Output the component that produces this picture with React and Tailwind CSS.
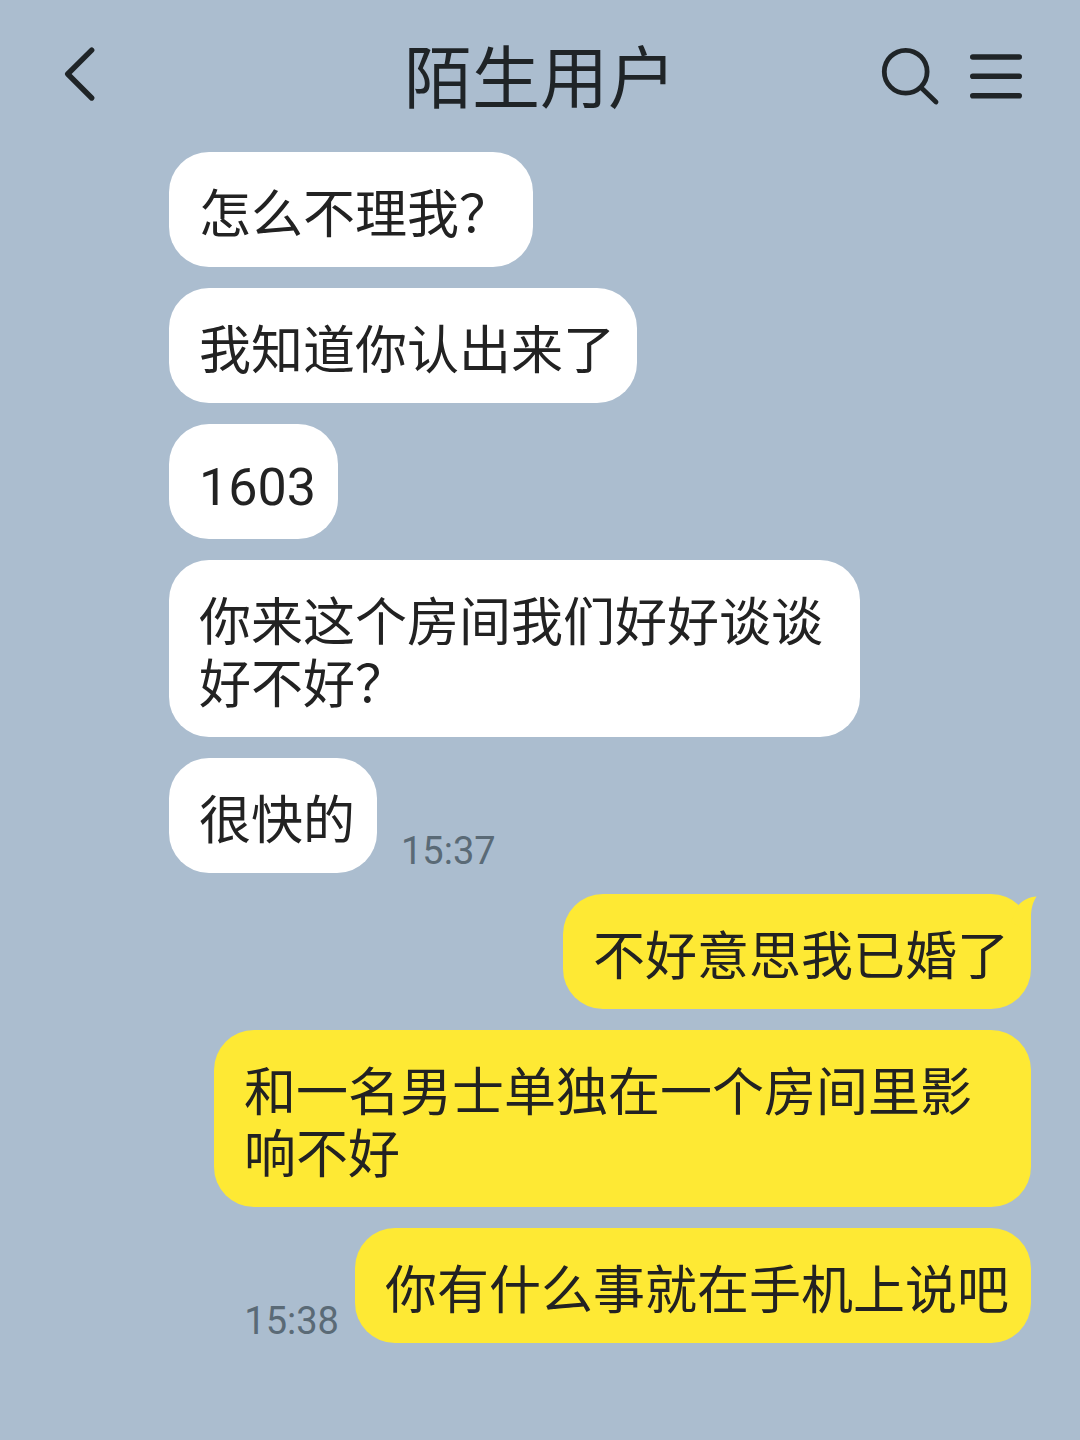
import React from 'react';
import clsx from 'clsx';

const title = '陌生用户';

const messages = [
  { id: 1, from: 'them', text: '怎么不理我？' },
  { id: 2, from: 'them', text: '我知道你认出来了' },
  { id: 3, from: 'them', text: '1603' },
  { id: 4, from: 'them', text: '你来这个房间我们好好谈谈好不好？' },
  { id: 5, from: 'them', text: '很快的', time: '15:37' },
  { id: 6, from: 'me', text: '不好意思我已婚了', tail: true },
  { id: 7, from: 'me', text: '和一名男士单独在一个房间里影响不好' },
  { id: 8, from: 'me', text: '你有什么事就在手机上说吧', time: '15:38' },
];

function BackIcon() {
  return (
    <svg className="size-15" viewBox="0 0 60 60" fill="none" stroke="currentColor" strokeWidth="5.4" strokeLinecap="round" strokeLinejoin="round" aria-hidden="true">
      <path d="M43.7 4.2 19.7 28 43.7 52" />
    </svg>
  );
}

function SearchIcon() {
  return (
    <svg className="size-15 overflow-visible" viewBox="0 0 60 60" fill="none" stroke="currentColor" strokeWidth="4.8" strokeLinecap="round" aria-hidden="true">
      <circle cx="27.7" cy="25.7" r="21.4" />
      <path d="M43.5 42 58 56" />
    </svg>
  );
}

function MenuIcon() {
  return (
    <svg className="size-15" viewBox="0 0 60 60" fill="none" stroke="currentColor" strokeWidth="5.6" strokeLinecap="round" aria-hidden="true">
      <path d="M6.8 11H53.2M6.8 30.3H53.2M6.8 49.8H53.2" />
    </svg>
  );
}

function Tail() {
  return (
    <svg className="absolute top-0 -right-2 size-10" viewBox="0 0 40 40" fill="#fee934" aria-hidden="true">
      <path d="M20 10.5C25 6 30 3 37.6 2.6C34 8 32 14 32 24V40L12 28Z" />
    </svg>
  );
}

function Message({ from, text, time, tail }) {
  const mine = from === 'me';
  return (
    <li className={clsx('flex items-end', mine ? 'flex-row-reverse gap-4' : 'gap-6')}>
      <p
        className={clsx(
          'relative rounded-[40px] pt-[33px] pr-[22px] pb-5 pl-[30px] text-[52px] leading-[62px] break-words',
          mine ? 'max-w-[817px] bg-[#fee934]' : 'max-w-[691px] bg-white'
        )}
      >
        {text}
        {tail && <Tail />}
      </p>
      {time && <time className="text-[38px] leading-[44px] text-[#5a6a76]">{time}</time>}
    </li>
  );
}

export default function App() {
  return (
    <div className="min-h-screen bg-[#abbdcf] font-[Roboto,'Noto_Sans_CJK_SC',sans-serif] text-[#222222]">
      <header className="grid grid-cols-[1fr_auto_1fr] items-center px-12 text-[#1f2427]">
        <button type="button" aria-label="返回" className="justify-self-start">
          <BackIcon />
        </button>
        <h1 className="pt-10 pb-8 text-[68px] leading-[80px]">{title}</h1>
        <div className="mr-1.5 flex gap-7 justify-self-end">
          <button type="button" aria-label="搜索">
            <SearchIcon />
          </button>
          <button type="button" aria-label="菜单">
            <MenuIcon />
          </button>
        </div>
      </header>

      <main className="pr-[49px] pb-24 pl-[169px]">
        <ul className="flex flex-col gap-[21px]">
          {messages.map(m => <Message key={m.id} {...m} />)}
        </ul>
      </main>
    </div>
  );
}
